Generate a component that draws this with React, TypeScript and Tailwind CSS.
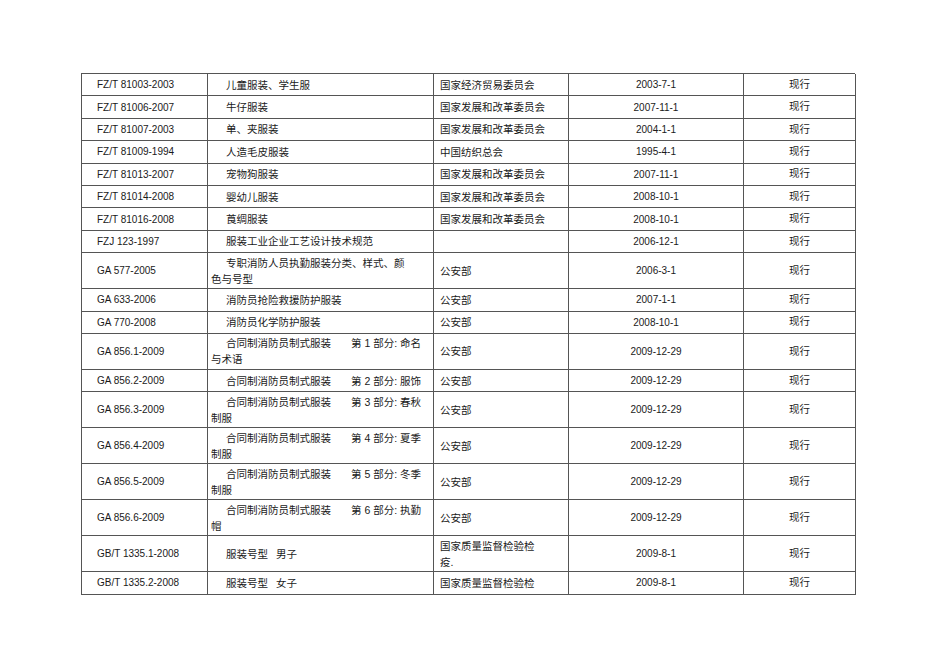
import React from "react";

type Row = {
  code: string;
  name: React.ReactNode;
  dept: React.ReactNode;
  date: string;
  tall?: boolean;
};

const Part = ({ n, tail }: { n: number; tail: string }) => (
  <>
    合同制消防员制式服装
    <span className="ml-[20px]">第 {n} 部分: {tail}</span>
  </>
);

const rows: Row[] = [
  { code: "FZ/T 81003-2003", name: "儿童服装、学生服", dept: "国家经济贸易委员会", date: "2003-7-1" },
  { code: "FZ/T 81006-2007", name: "牛仔服装", dept: "国家发展和改革委员会", date: "2007-11-1" },
  { code: "FZ/T 81007-2003", name: "单、夹服装", dept: "国家发展和改革委员会", date: "2004-1-1" },
  { code: "FZ/T 81009-1994", name: "人造毛皮服装", dept: "中国纺织总会", date: "1995-4-1" },
  { code: "FZ/T 81013-2007", name: "宠物狗服装", dept: "国家发展和改革委员会", date: "2007-11-1" },
  { code: "FZ/T 81014-2008", name: "婴幼儿服装", dept: "国家发展和改革委员会", date: "2008-10-1" },
  { code: "FZ/T 81016-2008", name: "莨绸服装", dept: "国家发展和改革委员会", date: "2008-10-1" },
  { code: "FZJ 123-1997", name: "服装工业企业工艺设计技术规范", dept: "", date: "2006-12-1" },
  {
    code: "GA 577-2005",
    name: (
      <>
        专职消防人员执勤服装分类、样式、颜
        <br />
        <span className="-ml-[15px]">色与号型</span>
      </>
    ),
    dept: "公安部",
    date: "2006-3-1",
    tall: true,
  },
  { code: "GA 633-2006", name: "消防员抢险救援防护服装", dept: "公安部", date: "2007-1-1" },
  { code: "GA 770-2008", name: "消防员化学防护服装", dept: "公安部", date: "2008-10-1" },
  {
    code: "GA 856.1-2009",
    name: (
      <>
        <Part n={1} tail="命名" />
        <br />
        <span className="-ml-[15px]">与术语</span>
      </>
    ),
    dept: "公安部",
    date: "2009-12-29",
    tall: true,
  },
  { code: "GA 856.2-2009", name: <Part n={2} tail="服饰" />, dept: "公安部", date: "2009-12-29" },
  {
    code: "GA 856.3-2009",
    name: (
      <>
        <Part n={3} tail="春秋" />
        <br />
        <span className="-ml-[15px]">制服</span>
      </>
    ),
    dept: "公安部",
    date: "2009-12-29",
    tall: true,
  },
  {
    code: "GA 856.4-2009",
    name: (
      <>
        <Part n={4} tail="夏季" />
        <br />
        <span className="-ml-[15px]">制服</span>
      </>
    ),
    dept: "公安部",
    date: "2009-12-29",
    tall: true,
  },
  {
    code: "GA 856.5-2009",
    name: (
      <>
        <Part n={5} tail="冬季" />
        <br />
        <span className="-ml-[15px]">制服</span>
      </>
    ),
    dept: "公安部",
    date: "2009-12-29",
    tall: true,
  },
  {
    code: "GA 856.6-2009",
    name: (
      <>
        <Part n={6} tail="执勤" />
        <br />
        <span className="-ml-[15px]">帽</span>
      </>
    ),
    dept: "公安部",
    date: "2009-12-29",
    tall: true,
  },
  {
    code: "GB/T 1335.1-2008",
    name: (
      <>
        服装号型<span className="ml-[8px]">男子</span>
      </>
    ),
    dept: (
      <>
        国家质量监督检验检
        <br />
        疫.
      </>
    ),
    date: "2009-8-1",
    tall: true,
  },
  {
    code: "GB/T 1335.2-2008",
    name: (
      <>
        服装号型<span className="ml-[8px]">女子</span>
      </>
    ),
    dept: "国家质量监督检验检",
    date: "2009-8-1",
  },
];

const cell = "flex items-center border-r border-b border-[#555] overflow-hidden";

export default function App() {
  return (
    <div className="min-h-[672px] w-[950px] bg-white pt-[73px] pl-[81px] text-[#1a1a1a] font-['Liberation_Sans','Noto_Sans_CJK_SC',sans-serif]">
      <div className="w-[774px] border-l border-t border-[#555]">
        {rows.map((r) => (
          <div
            key={r.code}
            className={`grid grid-cols-[126px_226px_135px_175px_112px] ${r.tall ? "h-[36px]" : "h-[22.4px]"}`}
          >
            <div className={`${cell} pl-[15px] text-[10px]`}>{r.code}</div>
            <div className={`${cell} pl-[18px] text-[10.5px] leading-[16px] whitespace-nowrap`}>
              <div>{r.name}</div>
            </div>
            <div className={`${cell} pl-[6px] text-[10.5px] leading-[16px] whitespace-nowrap`}>
              <div>{r.dept}</div>
            </div>
            <div className={`${cell} justify-center text-[10px]`}>{r.date}</div>
            <div className={`${cell} justify-center text-[10.5px]`}>现行</div>
          </div>
        ))}
      </div>
    </div>
  );
}
